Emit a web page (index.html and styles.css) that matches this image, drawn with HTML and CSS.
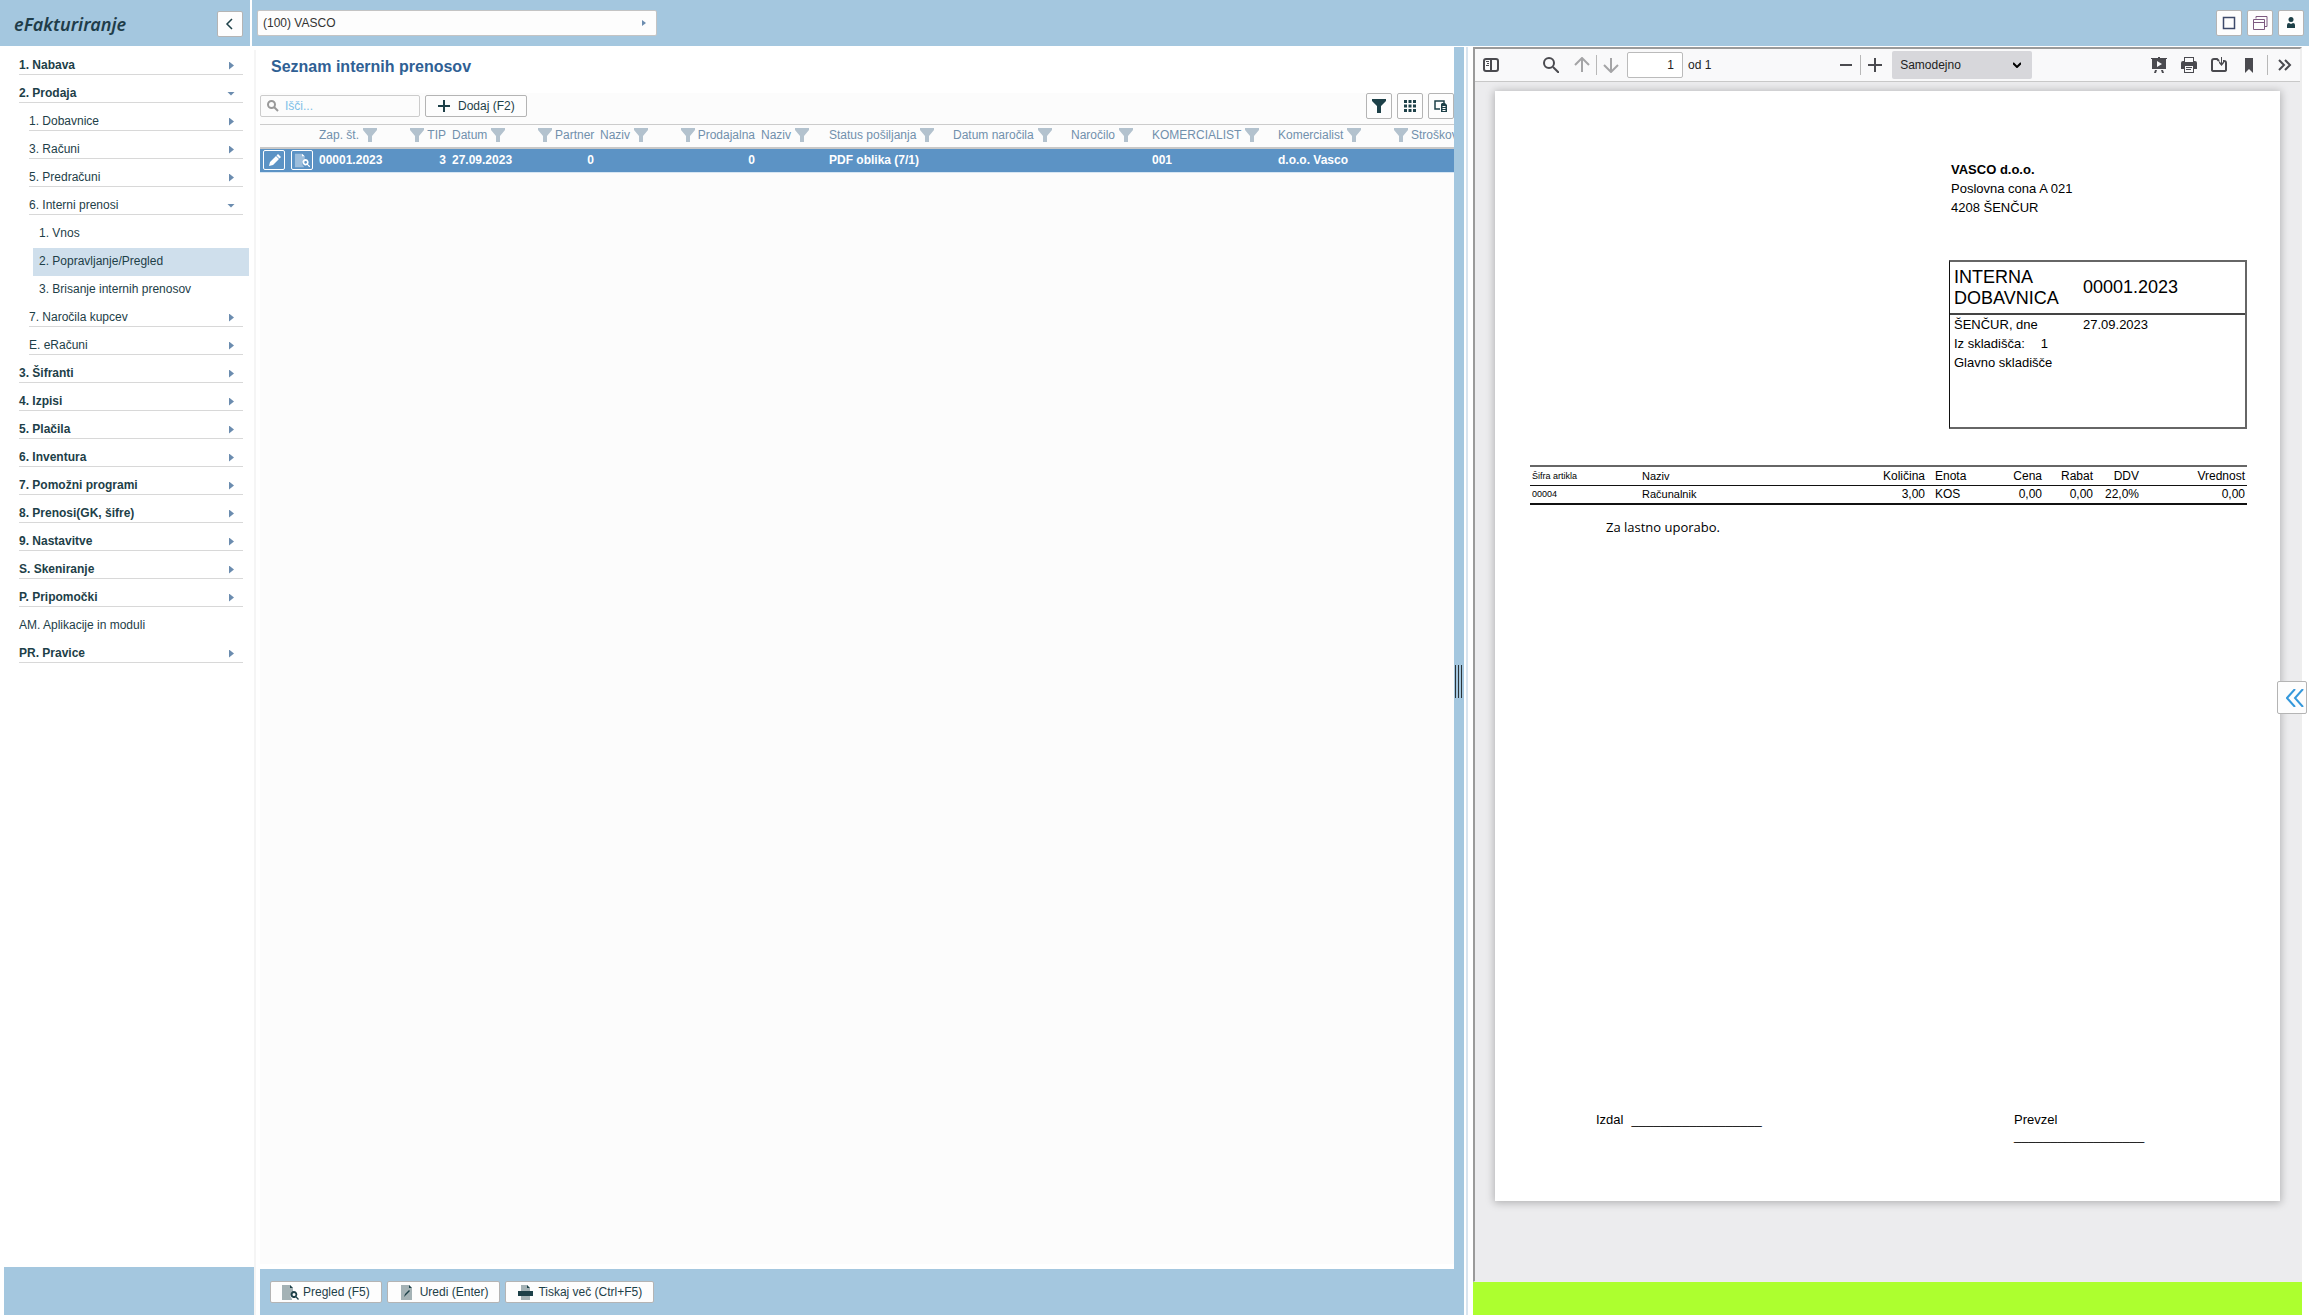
FILE: index.html
```html
<!DOCTYPE html>
<html lang="sl">
<head>
<meta charset="utf-8">
<title>eFakturiranje</title>
<link rel="stylesheet" href="styles.css">
</head>
<body>
<svg class="sprite" aria-hidden="true">
  <symbol id="funnel" viewBox="0 0 14 14"><path d="M0 0h14v2L9 8v6H5V8L0 2z"/></symbol>
  <symbol id="doc-search" viewBox="0 0 17 17"><path opacity=".4" d="M0 1h8l3 3v4a4 4 0 0 0-1 7v1H0z"/><path d="M8 1v3h3z"/><path fill-rule="evenodd" d="M12 7a3.500 3.500 0 1 0 1.800 6.500L16 16l1-1-2.400-2.400A3.500 3.500 0 0 0 12 7zm0 2a1.500 1.500 0 1 1 0 3 1.500 1.500 0 0 1 0-3z"/></symbol>
</svg>
<header class="topbar">
  <div class="brand">
    <span class="logo">eFakturiranje</span>
    <button class="square" aria-label="Skrij meni"><svg viewBox="0 0 24 24" class="stroke"><path d="M14 7l-5 5 5 5"/></svg></button>
  </div>
  <div class="topmain">
    <button class="company"><span>(100) VASCO</span><svg class="tri" viewBox="0 0 4 6"><path d="M0 0l4 3-4 3z"/></svg></button>
    <div class="window-tools">
      <button class="square" aria-label="Okno"><svg viewBox="0 0 24 24" class="stroke window"><rect x="6.500" y="6.500" width="11" height="11"/></svg></button>
      <button class="square" aria-label="Okna"><svg viewBox="0 0 24 24" class="stroke windows"><path d="M8 7.500V5.500h11v10h-2.500M5.500 8.500h11v10h-11zM5.500 11.500h11"/></svg></button>
      <button class="square" aria-label="Uporabnik"><svg viewBox="0 0 24 24"><circle cx="12" cy="8.500" r="2.500"/><path d="M8 17v-3q0-2 2-2l2 1 2-1q2 0 2 2v3z"/></svg></button>
    </div>
  </div>
</header>
<div class="workspace">
  <aside class="sidebar">
    <nav>
      <a href="#" class="item top closed">1. Nabava</a>
      <a href="#" class="item top open">2. Prodaja</a>
      <a href="#" class="item sub closed">1. Dobavnice</a>
      <a href="#" class="item sub closed">3. Računi</a>
      <a href="#" class="item sub closed">5. Predračuni</a>
      <a href="#" class="item sub open">6. Interni prenosi</a>
      <a href="#" class="item leaf">1. Vnos</a>
      <a href="#" class="item leaf active" aria-current="page">2. Popravljanje/Pregled</a>
      <a href="#" class="item leaf">3. Brisanje internih prenosov</a>
      <a href="#" class="item sub closed">7. Naročila kupcev</a>
      <a href="#" class="item sub closed">E. eRačuni</a>
      <a href="#" class="item top closed">3. Šifranti</a>
      <a href="#" class="item top closed">4. Izpisi</a>
      <a href="#" class="item top closed">5. Plačila</a>
      <a href="#" class="item top closed">6. Inventura</a>
      <a href="#" class="item top closed">7. Pomožni programi</a>
      <a href="#" class="item top closed">8. Prenosi(GK, šifre)</a>
      <a href="#" class="item top closed">9. Nastavitve</a>
      <a href="#" class="item top closed">S. Skeniranje</a>
      <a href="#" class="item top closed">P. Pripomočki</a>
      <a href="#" class="item plain">AM. Aplikacije in moduli</a>
      <a href="#" class="item top closed">PR. Pravice</a>
    </nav>
    <div class="sidebar-foot"></div>
  </aside>
  <main class="list">
    <h1>Seznam internih prenosov</h1>
    <div class="list-body">
      <div class="toolbar">
        <label class="search"><svg viewBox="0 0 12 12"><circle cx="4.500" cy="4.500" r="3.500"/><path d="M7 7l4 4"/></svg><input type="text" placeholder="Išči..." aria-label="Išči"></label>
        <button class="btn add"><svg class="plus" viewBox="0 0 12 12"><path d="M6 0v12M0 6h12"/></svg>Dodaj (F2)</button>
        <div class="grid-tools">
          <button class="square" aria-label="Filter"><svg viewBox="0 0 24 24"><path d="M5 5h14v2l-5 5v7h-4v-7L5 7z"/></svg></button>
          <button class="square" aria-label="Stolpci"><svg viewBox="0 0 24 24"><path d="M6 6h3v3H6zM10.500 6h3v3h-3zM15 6h3v3h-3zM6 10.500h3v3H6zM10.500 10.500h3v3h-3zM15 10.500h3v3h-3zM6 15h3v3H6zM10.500 15h3v3h-3zM15 15h3v3h-3z"/></svg></button>
          <button class="square" aria-label="Izvoz"><svg viewBox="0 0 24 24"><path fill="none" stroke="#1d4048" stroke-width="1.500" d="M11 15H6V7h9v3"/><path fill-rule="evenodd" d="M13 9h3l2 2v7h-6v-8zM13.500 12v1h3v-1zm0 2v1h3v-1zm0 2v1h3v-1z"/></svg></button>
        </div>
      </div>
      <table class="grid">
        <colgroup><col class="w56"><col class="w89"><col class="w44"><col class="w86"><col class="w62"><col class="w80"><col class="w81"><col class="w68"><col class="w124"><col class="w118"><col class="w81"><col class="w126"><col class="w116"><col class="rest"></colgroup>
        <thead><tr>
          <th></th>
          <th>Zap. št.<svg><use href="#funnel"/></svg></th>
          <th class="num"><svg><use href="#funnel"/></svg>TIP</th>
          <th>Datum<svg><use href="#funnel"/></svg></th>
          <th class="num"><svg><use href="#funnel"/></svg>Partner</th>
          <th>Naziv<svg><use href="#funnel"/></svg></th>
          <th class="num"><svg><use href="#funnel"/></svg>Prodajalna</th>
          <th>Naziv<svg><use href="#funnel"/></svg></th>
          <th>Status pošiljanja<svg><use href="#funnel"/></svg></th>
          <th>Datum naročila<svg><use href="#funnel"/></svg></th>
          <th>Naročilo<svg><use href="#funnel"/></svg></th>
          <th>KOMERCIALIST<svg><use href="#funnel"/></svg></th>
          <th>Komercialist<svg><use href="#funnel"/></svg></th>
          <th class="lead"><svg><use href="#funnel"/></svg>Stroškov</th>
        </tr></thead>
        <tbody><tr>
          <td class="actions"><div><button aria-label="Uredi"><svg viewBox="0 0 20 18"><path d="M5 15l1-4 6-6 3 3-6 6zM12.500 4.500L14 3l3 3-1.500 1.500z"/></svg></button><button aria-label="Pregled"><svg viewBox="-3 -1 22 18"><use href="#doc-search" width="17" height="17"/></svg></button></div></td>
          <td>00001.2023</td><td class="num">3</td><td>27.09.2023</td><td class="num">0</td><td></td><td class="num">0</td><td></td><td>PDF oblika (7/1)</td><td></td><td></td><td>001</td><td>d.o.o. Vasco</td><td></td>
        </tr></tbody>
      </table>
    </div>
    <footer class="actions-bar">
      <button class="btn"><svg class="i17"><use href="#doc-search"/></svg>Pregled (F5)</button>
      <button class="btn"><svg class="i17" viewBox="0 0 17 17"><path opacity=".4" d="M2 1h8l3 3v12H2z"/><path d="M10 1v3h3zM5 13l1-3 4-4 1 1-4 4z"/></svg>Uredi (Enter)</button>
      <button class="btn"><svg class="i17" viewBox="0 0 17 17"><path opacity=".4" d="M4 1h6l3 3v3H4zM4 11h9v5H4z"/><path d="M10 1v3h3zM1 7h15v5H1z"/></svg>Tiskaj več (Ctrl+F5)</button>
    </footer>
  </main>
  <div class="splitter"><span class="grip"></span></div>
  <section class="viewer">
    <div class="frame">
      <div class="pdfbar">
        <button aria-label="Stranska vrstica"><svg viewBox="0 0 16 16"><path fill="none" stroke="#4a4a4f" stroke-width="2" d="M3 2h10q2 0 2 2v8q0 2-2 2H3q-2 0-2-2V4q0-2 2-2zM8 2v12"/><path d="M3 4h3v1H3zM4 6h2v1H4zM3 8h3v1H3z"/></svg></button>
        <button class="find" aria-label="Išči"><svg viewBox="0 0 16 16" class="line"><circle cx="6" cy="6" r="5"/><path d="M10 10l6 6"/></svg></button>
        <button class="up dim" aria-label="Nazaj"><svg viewBox="0 0 16 16" class="line"><path d="M8 15V1M1 8l7-7 7 7"/></svg></button>
        <i class="sep"></i>
        <button class="down dim" aria-label="Naprej"><svg viewBox="0 0 16 16" class="line"><path d="M8 1v14M1 8l7 7 7-7"/></svg></button>
        <input class="page-no" type="text" value="1" aria-label="Stran">
        <span class="page-count">od 1</span>
        <div class="zoom-tools">
          <button aria-label="Pomanjšaj"><svg viewBox="0 0 16 16" class="line"><path d="M2 8h12"/></svg></button>
          <i class="sep"></i>
          <button aria-label="Povečaj"><svg viewBox="0 0 16 16" class="line"><path d="M8 1v14M1 8h14"/></svg></button>
          <span class="scale"><select aria-label="Povečava"><option>Samodejno</option></select><svg viewBox="0 0 8 6"><path d="M0 1l4 4 4-4"/></svg></span>
        </div>
        <div class="pdf-tools">
          <button aria-label="Predstavitev"><svg viewBox="0 0 16 16"><path fill-rule="evenodd" d="M0 1h7V0h2v1h7v1h-1v10H1V2H0zm6 3v6l5-3zM4 13h2l-1 3H3zM10 13h2l1 3h-2z"/></svg></button>
          <button aria-label="Natisni"><svg viewBox="0 0 16 16"><path fill-rule="evenodd" d="M3 0h10v4h1q2 0 2 2v6h-3v4H3v-4H0V6q0-2 2-2h1zm1 1v4h8V1zm0 8v6h8V9zm1 1h6v1H5zm0 2h5v1H5z"/></svg></button>
          <button aria-label="Prenesi"><svg viewBox="0 0 16 16"><path fill="none" stroke="#4a4a4f" stroke-width="2" d="M12 4h1q2 0 2 2v7q0 1-2 1H3q-2 0-2-1V4q0-2 2-2h3l2 2"/><path d="M10 0h1v6l2-2v2l-2.500 3L8 6V4l2 2z"/></svg></button>
          <button aria-label="Zaznamek"><svg viewBox="0 0 16 16"><path d="M4 1h8v15l-4-4-4 4z"/></svg></button>
        </div>
        <i class="sep"></i>
        <button class="more" aria-label="Orodja"><svg viewBox="0 0 16 16" class="line"><path d="M2 3l5 5-5 5M8 3l5 5-5 5"/></svg></button>
      </div>
      <div class="canvas">
        <article class="sheet">
          <div class="address"><strong>VASCO d.o.o.</strong><span>Poslovna cona A 021</span><span>4208 ŠENČUR</span></div>
          <div class="docbox">
            <div class="docbox-head"><span>INTERNA DOBAVNICA</span><span>00001.2023</span></div>
            <div class="docbox-body">
              <span>ŠENČUR, dne</span><span>27.09.2023</span>
              <span class="stock">Iz skladišča:<b>1</b></span><span></span>
              <span>Glavno skladišče</span>
            </div>
          </div>
          <table class="lines">
            <colgroup><col class="c-code"><col class="c-name"><col class="c-qty"><col class="c-unit"><col class="c-price"><col class="c-disc"><col class="c-vat"><col class="c-sum"></colgroup>
            <thead><tr><th class="code">Šifra artikla</th><th class="name">Naziv</th><th class="num">Količina</th><th class="unit">Enota</th><th class="num">Cena</th><th class="num">Rabat</th><th class="num vat">DDV</th><th class="num">Vrednost</th></tr></thead>
            <tbody><tr><td class="code">00004</td><td class="name">Računalnik</td><td class="num">3,00</td><td class="unit">KOS</td><td class="num">0,00</td><td class="num">0,00</td><td class="num vat">22,0%</td><td class="num">0,00</td></tr></tbody>
          </table>
          <p class="note">Za lastno uporabo.</p>
          <div class="signs"><div class="issued"><span>Izdal</span><span>__________________</span></div><div class="received"><span>Prevzel</span><span>__________________</span></div></div>
        </article>
      </div>
    </div>
    <div class="status"></div>
    <button class="expand" aria-label="Razširi"><svg viewBox="0 0 18 18"><path d="M9 0L1 9l8 9M17 0L9 9l8 9"/></svg></button>
  </section>
</div>
</body>
</html>
```
FILE: styles.css
```css
* { box-sizing: border-box; }
body {
  margin: 0;
  min-height: 100vh;
  display: flex;
  flex-direction: column;
  background: #fff;
  color: #1d4048;
  font: 12px/14px "Liberation Sans", Arial, sans-serif;
}
button, input, select { font: inherit; color: inherit; margin: 0; }
button { padding: 0; cursor: pointer; }
svg { display: block; fill: currentColor; }
.sprite { position: absolute; width: 0; height: 0; }
.square {
  width: 26px;
  height: 26px;
  flex: none;
  background: #fdfdfd;
  border: 1px solid #b4b4b4;
  border-radius: 2px;
}
.square svg { width: 24px; height: 24px; }
.square .stroke { fill: none; stroke: currentColor; stroke-width: 1.500; }
.square .window { stroke: #3d4a6b; }
.square .windows { stroke: #7d5a80; stroke-width: 1; }
.btn {
  height: 22px;
  display: flex;
  align-items: center;
  background: #fdfdfd;
  border: 1px solid #b4b4b4;
  border-radius: 2px;
  white-space: nowrap;
}

/* top bar */
.topbar { display: flex; gap: 2px; height: 46px; flex: none; }
.brand {
  width: 250px;
  display: flex;
  align-items: center;
  justify-content: space-between;
  padding: 2px 7px 0 14px;
  background: #a4c7df;
}
.logo { font: italic 600 18px/24px "Noto Sans", sans-serif; color: #1f3d4a; }
.topmain {
  flex: 1;
  display: flex;
  justify-content: space-between;
  align-items: center;
  padding: 0 5px;
  background: #a4c7df;
}
.company {
  width: 400px;
  height: 26px;
  display: flex;
  align-items: center;
  justify-content: space-between;
  padding: 0 10px 0 5px;
  background: #fdfdfd;
  border: 1px solid #c4c4c4;
  border-radius: 2px;
  color: #333;
}
.tri { width: 4px; height: 6px; fill: #6b8caf; }
.window-tools { display: flex; gap: 5px; }

/* work area */
.workspace { flex: 1; display: flex; }
.sidebar {
  width: 256px;
  flex: none;
  display: flex;
  flex-direction: column;
  justify-content: space-between;
  margin-top: 4px;
  padding: 2px 0 0 4px;
  border-right: 2px solid #f5f5f5;
}
.item {
  display: flex;
  align-items: center;
  justify-content: space-between;
  height: 23px;
  margin: 0 11px 5px 15px;
  padding-top: 3px;
  border-bottom: 1px solid #d8d8d8;
  color: #1d4048;
  text-decoration: none;
}
.top { font-weight: bold; }
.sub { margin-left: 25px; }
.plain { border-color: transparent; }
.leaf { height: 28px; margin: 0 5px 0 29px; padding: 0 0 2px 6px; border: 0; }
.active { background: #cfdfec; }
.closed::after, .open::after { content: ""; background: #6b8caf; margin-top: 2px; }
.closed::after { width: 5px; height: 8px; margin-right: 9px; clip-path: polygon(0 0, 100% 50%, 0 100%); }
.open::after { width: 8px; height: 4px; margin-right: 8px; clip-path: polygon(0 0, 100% 0, 50% 100%); }
.sidebar-foot { height: 48px; background: #a4c7df; }

.list {
  flex: 1194 1 0;
  min-width: 0;
  margin-left: 4px;
  display: flex;
  flex-direction: column;
}
h1 { margin: 0; padding: 11px 11px 16px; font-size: 16px; line-height: 20px; color: #2f6094; }
.list-body { flex: 1; background: #fcfcfc; overflow: hidden; }
.toolbar { display: flex; align-items: center; gap: 5px; height: 31px; padding-bottom: 5px; }
.search {
  width: 160px;
  height: 22px;
  display: flex;
  align-items: center;
  gap: 6px;
  padding: 0 6px;
  border: 1px solid #ccc;
  border-radius: 2px;
}
.search svg { width: 12px; height: 12px; flex: none; fill: none; stroke: #999; stroke-width: 2; }
.search input { width: 100%; padding: 0; border: 0; outline: 0; background: none; }
.search ::placeholder { color: #7cc0e8; opacity: 1; }
.add { padding: 0 11px 0 12px; gap: 8px; }
.plus { width: 12px; height: 12px; stroke: currentColor; stroke-width: 2; }
.grid-tools { display: flex; gap: 5px; margin-left: auto; }

.grid { width: 100%; table-layout: fixed; border-collapse: collapse; white-space: nowrap; }
.grid th, .grid td { padding: 0 3px; text-align: left; overflow: hidden; }
.grid th {
  height: 23px;
  padding-bottom: 2px;
  border-top: 1px solid #ccc;
  border-bottom: 2px solid #c8c8c8;
  font-weight: normal;
  color: #7190ac;
}
.grid th svg { display: inline-block; width: 14px; height: 14px; vertical-align: -3px; margin: 0 3px 0 4px; fill: #b3c2ce; }
.grid .num svg, .grid .lead svg { margin-left: 0; }
.grid td { height: 25px; background: #5c93c5; border-bottom: 1px solid #d7e6f3; color: #fff; font-weight: bold; }
.grid .num { text-align: right; }
.grid .actions div { display: flex; gap: 6px; }
.grid .actions button {
  width: 22px;
  height: 20px;
  background: none;
  border: 1px solid #fff;
  border-radius: 2px;
}
.actions svg { width: 20px; height: 18px; }
.w56 { width: 56px; } .w89 { width: 89px; } .w44 { width: 44px; } .w86 { width: 86px; }
.w62 { width: 62px; } .w80 { width: 80px; } .w81 { width: 81px; } .w68 { width: 68px; }
.w124 { width: 124px; } .w118 { width: 118px; } .w126 { width: 126px; } .w116 { width: 116px; }
.rest { width: auto; }

.actions-bar {
  display: flex;
  gap: 5px;
  height: 46px;
  margin-top: 5px;
  padding: 12px 10px;
  background: #a4c7df;
}
.actions-bar .btn { padding: 0 11px; gap: 4px; }
.i17 { width: 17px; height: 17px; }

.splitter {
  width: 14px;
  flex: none;
  margin-top: 1px;
  display: flex;
  align-items: center;
  background: linear-gradient(90deg, #a4c7df 10px, #fff 10px, #fff 12px, #d8e4ef 12px);
}
.grip { width: 9px; height: 33px; background: repeating-linear-gradient(90deg, transparent 0 1px, #2c3438 1px 2px, transparent 2px 3px); }

/* document viewer */
.viewer {
  position: relative;
  flex: 829 1 0;
  min-width: 0;
  margin: 1px 7px 0 5px;
  display: flex;
  flex-direction: column;
}
.frame {
  flex: 1;
  display: flex;
  flex-direction: column;
  border: 2px solid #9a9a9a;
  border-right-color: #eee;
  border-bottom: 1px solid #eee;
  background: #ececee;
}
.pdfbar {
  display: flex;
  align-items: center;
  height: 33px;
  padding: 0 7px 0 8px;
  background: #f9f9fa;
  border-bottom: 1px solid #c8c8c8;
  color: #4a4a4f;
}
.pdfbar button { border: 0; background: none; }
.pdfbar button svg { width: 16px; height: 16px; }
.line { fill: none; stroke: currentColor; stroke-width: 2; }
.pdfbar .dim { color: #a4a4a6; }
.sep { flex: none; width: 1px; height: 20px; background: #b8b8b8; }
.find { margin-left: 44px; }
.up { margin: 0 6px 0 15px; }
.down { margin: 0 8px 0 6px; }
.page-no {
  width: 56px;
  height: 26px;
  padding: 0 8px;
  border: 1px solid #bbb;
  border-radius: 2px;
  background: #fff;
  text-align: right;
}
.page-no, .page-count, .scale { color: #222; }
.page-count { margin-left: 5px; }
.zoom-tools { display: flex; align-items: center; gap: 6px; margin: 0 auto; padding-left: 8px; }
.scale { display: grid; align-items: center; width: 140px; margin-left: 3px; }
.scale select {
  grid-area: 1 / 1;
  height: 28px;
  padding: 0 8px;
  appearance: none;
  border: 0;
  border-radius: 2px;
  background: #d7d7db;
}
.scale svg { grid-area: 1 / 1; justify-self: end; width: 8px; height: 6px; margin-right: 11px; fill: none; stroke: #000; stroke-width: 2; pointer-events: none; }
.pdf-tools { display: flex; gap: 14px; margin-right: 10px; }
.more { margin-left: 9px; }

.canvas { flex: 1; padding: 9px 20px 80px; }
.sheet {
  min-height: 1110px;
  display: flex;
  flex-direction: column;
  padding: 69px 33px 57px 35px;
  background: #fff;
  box-shadow: 0 1px 8px 1px rgba(0, 0, 0, .25);
  color: #000;
  font-size: 13px;
  line-height: 19px;
}
.address { width: 296px; margin-left: auto; display: grid; }
.docbox { width: 298px; height: 169px; margin: 43px 0 36px auto; border: 2px solid #666; border-left: 1px solid #111; }
.docbox-head { display: grid; grid-template-columns: 129px 1fr; align-items: center; height: 53px; padding-left: 4px; border-bottom: 2px solid #444; font-size: 18px; line-height: 21px; }
.docbox-body { display: grid; grid-template-columns: 129px 1fr; padding-left: 4px; }
.stock { display: flex; gap: 16px; }
.stock b { font-weight: normal; }
.lines { width: 100%; table-layout: fixed; border-collapse: collapse; font-size: 12px; line-height: 14px; white-space: nowrap; border-bottom: 2px solid #111; }
.lines th, .lines td { height: 19px; padding: 0 2px; font-weight: normal; text-align: left; }
.lines th { border-top: 2px solid #666; border-bottom: 1px solid #111; }
.lines .num { text-align: right; }
.lines .code { font-size: 9px; }
.lines .name { font-size: 11px; }
.lines .unit { padding-left: 8px; }
.lines .vat { padding-right: 4px; }
.c-code { width: 110px; } .c-qty { width: 70px; } .c-unit { width: 60px; } .c-price { width: 57px; }
.c-disc { width: 51px; } .c-vat { width: 48px; } .c-sum { width: 104px; }
.note { margin: 13px 0 0 76px; font: 13px/18px "Open Sans", sans-serif; }
.signs { display: flex; margin-top: auto; padding-left: 66px; line-height: 16px; }
.issued { display: flex; gap: 8px; flex: 1; }
.received { display: grid; width: 233px; }
.status { height: 33px; background: #adff2f; }
.expand {
  position: absolute;
  right: -5px;
  top: 634px;
  width: 30px;
  height: 33px;
  padding-left: 8px;
  background: #fdfdfd;
  border: 1px solid #b4b4b4;
  border-radius: 2px;
}
.expand svg { width: 18px; height: 18px; fill: none; stroke: #3498db; stroke-width: 2; }
```
